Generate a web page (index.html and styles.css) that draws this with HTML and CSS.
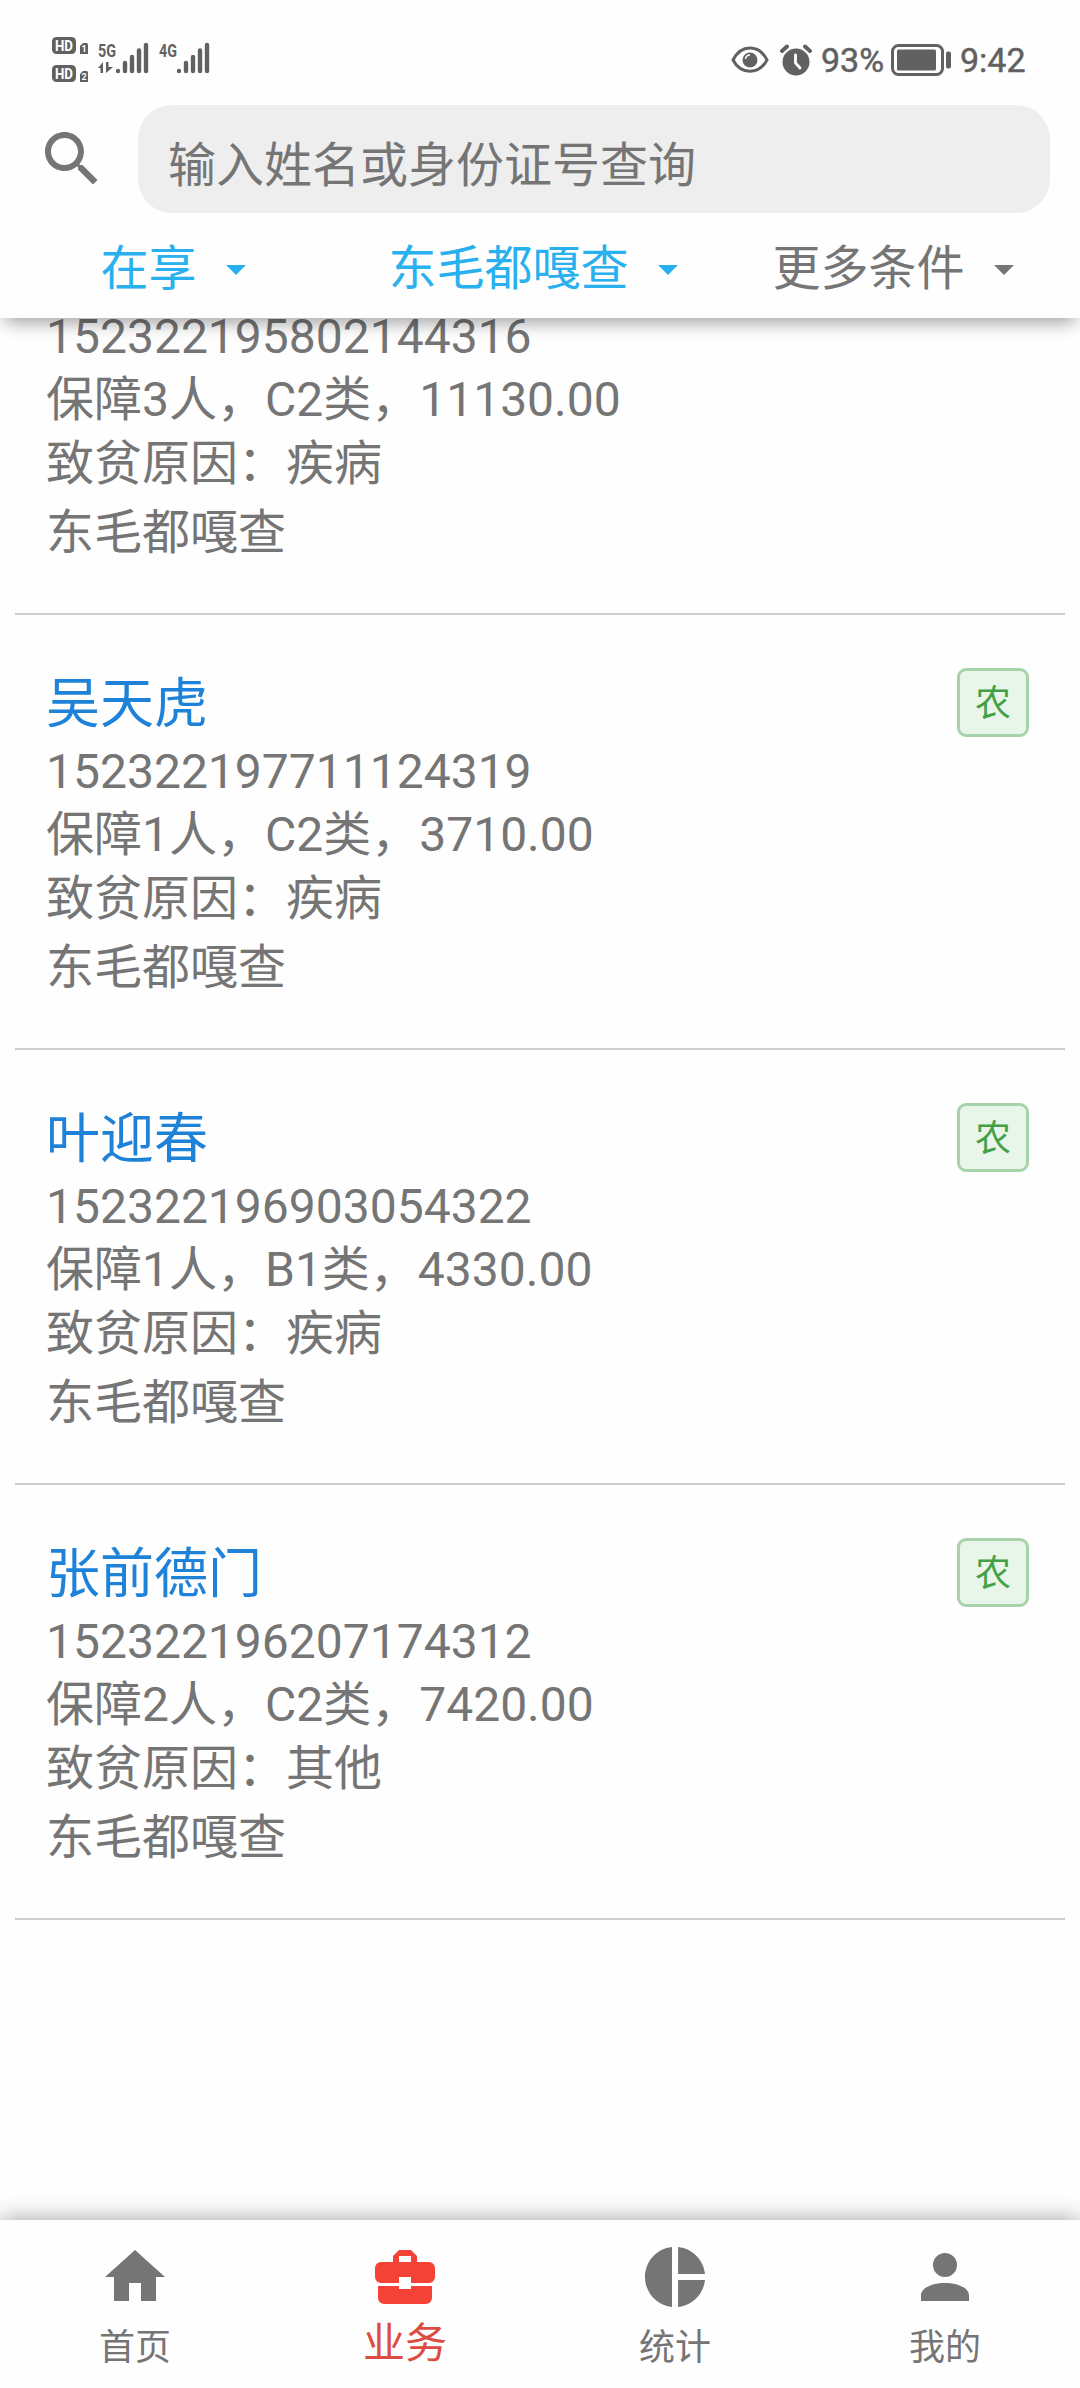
FILE: index.html
```html
<!DOCTYPE html>
<html lang="zh-CN">
<head>
    <meta charset="UTF-8">
    <meta name="viewport" content="width=device-width, initial-scale=1.0">
    <title>业务</title>
    <link rel="stylesheet" href="styles.css">
</head>
<body>
    <div class="app">
        <header class="header">
            <div class="status-bar">
                <svg class="signal" width="160" height="50" viewBox="0 0 160 50">
                    <!-- HD + sim 1 / 2 -->
                    <rect x="0" y="2" width="24" height="17" rx="4.5"/>
                    <text x="3" y="15.5" textLength="18" lengthAdjust="spacingAndGlyphs" class="hd">HD</text>
                    <path d="M28 11l3-3h3.500q1.500 0 1.500 1.500V19h-8z"/>
                    <text x="32" y="17" class="sim">1</text>
                    <rect x="0" y="30" width="24" height="17" rx="4.5"/>
                    <text x="3" y="43.5" textLength="18" lengthAdjust="spacingAndGlyphs" class="hd">HD</text>
                    <path d="M28 39l3-3h3.500q1.500 0 1.500 1.500V47h-8z"/>
                    <text x="32" y="45" class="sim">2</text>
                    <text x="46" y="21.5" textLength="18" lengthAdjust="spacingAndGlyphs" class="net">5G</text>
                    <path d="M46 33l5-6v11h-2.500v-5zM54 27h2.500v5h4.500l-7 6z"/>
                    <path d="M66 36v0M73 28v8M80 22v14M87 15.500v20.500M94 10v26" class="bars"/>
                    <text x="107" y="21.500" textLength="18" lengthAdjust="spacingAndGlyphs" class="net">4G</text>
                    <path d="M127 36v0M134 28v8M141 22v14M148 15.500v20.500M155 10v26" class="bars"/>
                </svg>
                <div class="status-right">
                    <svg width="38" height="30" viewBox="0 0 38 30">
                        <path d="M2 15C10-1 28-1 36 15C28 30 10 30 2 15z" fill="none" stroke="#616161" stroke-width="3"/>
                        <circle cx="19" cy="15" r="7.500"/>
                        <path d="M14.500 14a4.500 4.500 0 0 1 4.500-4" fill="none" stroke="#fff" stroke-width="1.500"/>
                    </svg>
                    <svg class="alarm" width="34" height="32" viewBox="0 0 34 32">
                        <circle cx="17" cy="18" r="13.500"/>
                        <path d="M3 7l5-4.500M31 7l-5-4.500" stroke="#616161" stroke-width="4" stroke-linecap="round"/>
                        <path d="M16.500 11v8l4.500 5" fill="none" stroke="#fff" stroke-width="2.800" stroke-linecap="round"/>
                    </svg>
                    <span class="percent">93%</span>
                    <svg class="battery" width="60" height="32" viewBox="0 0 60 32">
                        <rect x="1.500" y="1.500" width="50" height="29" rx="6" class="line"/>
                        <rect x="6" y="5.500" width="39" height="21" rx="1.500"/>
                        <rect x="55" y="7.500" width="5" height="17" rx="2"/>
                    </svg>
                    <span class="time">9:42</span>
                </div>
            </div>
            <div class="search">
                <svg class="icon" viewBox="0 0 24 24"><path d="M15.500 14h-.79l-.28-.27C15.410 12.590 16 11.110 16 9.500 16 5.910 13.090 3 9.500 3S3 5.910 3 9.500 5.910 16 9.500 16c1.610 0 3.090-.59 4.230-1.570l.27.28v.79l5 4.990L20.490 19l-4.990-5zm-6 0C7.010 14 5 11.990 5 9.500S7.010 5 9.500 5 14 7.010 14 9.500 11.990 14 9.500 14z"/></svg>
                <input class="search-input" type="text" placeholder="输入姓名或身份证号查询">
            </div>
            <div class="filters">
                <div class="filter active">在享<svg class="arrow" viewBox="0 0 24 24"><path d="M7 10l5 5 5-5z"/></svg></div>
                <div class="filter active">东毛都嘎查<svg class="arrow" viewBox="0 0 24 24"><path d="M7 10l5 5 5-5z"/></svg></div>
                <div class="filter">更多条件<svg class="arrow" viewBox="0 0 24 24"><path d="M7 10l5 5 5-5z"/></svg></div>
            </div>
        </header>

        <main class="list">
            <div class="card first">
                <div class="row">152322195802144316</div>
                <div class="row">保障3人，C2类，11130.00</div>
                <div class="row reason">致贫原因：疾病</div>
                <div class="row village">东毛都嘎查</div>
            </div>
            <div class="card">
                <div class="title">
                    <span class="name">吴天虎</span>
                    <span class="badge">农</span>
                </div>
                <div class="row">152322197711124319</div>
                <div class="row">保障1人，C2类，3710.00</div>
                <div class="row reason">致贫原因：疾病</div>
                <div class="row village">东毛都嘎查</div>
            </div>
            <div class="card">
                <div class="title">
                    <span class="name">叶迎春</span>
                    <span class="badge">农</span>
                </div>
                <div class="row">152322196903054322</div>
                <div class="row">保障1人，B1类，4330.00</div>
                <div class="row reason">致贫原因：疾病</div>
                <div class="row village">东毛都嘎查</div>
            </div>
            <div class="card">
                <div class="title">
                    <span class="name">张前德门</span>
                    <span class="badge">农</span>
                </div>
                <div class="row">152322196207174312</div>
                <div class="row">保障2人，C2类，7420.00</div>
                <div class="row reason">致贫原因：其他</div>
                <div class="row village">东毛都嘎查</div>
            </div>
        </main>

        <nav class="bottom-nav">
            <div class="nav-item">
                <svg class="icon" viewBox="0 0 24 24"><path d="M10 20v-6h4v6h5v-8h3L12 3 2 12h3v8z"/></svg>
                <span>首页</span>
            </div>
            <div class="nav-item active">
                <svg class="icon" viewBox="0 0 24 24"><path fill-rule="evenodd" d="M10 3h4l2 2v2h4a2 2 0 0 1 2 2v3a2 2 0 0 1-2 2h-6v-2h-4v2H4a2 2 0 0 1-2-2V9a2 2 0 0 1 2-2h4V5zM10 5v2h4V5zM3 15h7v1h4v-1h7v4a2 2 0 0 1-2 2H5a2 2 0 0 1-2-2z"/></svg>
                <span>业务</span>
            </div>
            <div class="nav-item">
                <svg class="icon" viewBox="0 0 24 24"><path d="M11 2v20c-5.070-.5-9-4.790-9-10s3.930-9.500 9-10zm2.030 0v8.990H22c-.47-4.740-4.240-8.520-8.970-8.990zm0 11.010V22c4.740-.47 8.500-4.250 8.970-8.990h-8.970z"/></svg>
                <span>统计</span>
            </div>
            <div class="nav-item">
                <svg class="icon" viewBox="0 0 24 24"><path d="M12 4a4 4 0 1 1 0 8 4 4 0 0 1 0-8zM12 14c4.420 0 8 1.790 8 4v2H4v-2c0-2.210 3.580-4 8-4z"/></svg>
                <span>我的</span>
            </div>
        </nav>
    </div>
</body>
</html>
```

FILE: styles.css
```css
* { box-sizing: border-box; }
body {
    margin: 0;
    font-family: Roboto, "Noto Sans CJK SC", sans-serif;
    font-size: 48px;
    color: #757575;
    background-color: #fefefe;
}
svg {
    display: block;
    flex: none;
    fill: currentColor;
}
.app {
    display: flex;
    flex-direction: column;
    height: 2388px;
    overflow: hidden;
}

/* header */
.header {
    position: relative;
    z-index: 1;
    flex: none;
    height: 318px;
    background-color: #fefefe;
    box-shadow: 0 12px 15px -6px rgba(0,0,0,0.28), 0 3px 18px rgba(0,0,0,0.08);
}
.status-bar {
    display: flex;
    justify-content: space-between;
    height: 105px;
    padding: 35px 53px 0 52px;
    color: #616161;
}
.line {
    fill: none;
    stroke: #616161;
    stroke-width: 3;
}
.bars {
    fill: none;
    stroke: #616161;
    stroke-width: 4.4;
    stroke-linecap: round;
}
.hd, .sim {
    font-size: 14px;
    font-weight: 700;
    fill: #fff;
}
.sim {
    font-size: 9px;
    text-anchor: middle;
}
.net {
    font-size: 18px;
    font-weight: 700;
}
.status-right {
    display: flex;
    align-items: center;
    height: 50px;
    font-size: 34px;
    line-height: 50px;
    -webkit-text-stroke: 0.5px #616161;
}
.alarm { margin-left: 10px; }
.percent {
    width: 70px;
    margin-left: 8px;
}
.time {
    width: 67px;
    margin-left: 9px;
}
.search {
    display: flex;
    height: 108px;
    padding: 0 30px 0 36px;
}
.icon {
    width: 72px;
    height: 72px;
}
.search .icon { margin: 18px 30px 0 0; }
.search-input {
    flex: 1;
    padding: 12px 30px 0;
    border: none;
    border-radius: 34px;
    background-color: #eee;
    font: inherit;
}
.search-input::placeholder {
    color: #757575;
    opacity: 1;
}
.filters { display: flex; }
.filter {
    display: flex;
    flex: 1;
    align-items: center;
    justify-content: center;
    height: 105px;
    padding-top: 6px;
    line-height: 105px;
}
.filter.active { color: #29b0ee; }
.arrow {
    width: 48px;
    height: 48px;
    margin-left: 15px;
}

/* list */
.list {
    flex: 1;
    margin-top: -13px;
    padding: 0 15px;
}
.card {
    padding: 55px 31px 49px;
    border-bottom: 2px solid #cecece;
}
.card.first { padding-top: 0; }
.title {
    display: flex;
    justify-content: space-between;
    height: 70px;
    padding-right: 5px;
}
.name {
    font-size: 54px;
    line-height: 70px;
    color: #1e82d8;
}
.badge {
    width: 72px;
    height: 69px;
    margin-top: -2px;
    border: 3px solid #a8d3aa;
    border-radius: 9px;
    background-color: #e8f5e9;
    font-size: 36px;
    line-height: 67px;
    text-align: center;
    color: #43a047;
}
.row {
    height: 63px;
    line-height: 63px;
    white-space: nowrap;
}
.reason { margin-top: 1px; }
.village { margin-top: 6px; }

/* bottom navigation */
.bottom-nav {
    position: relative;
    display: flex;
    flex: none;
    height: 168px;
    background-color: #fefefe;
    box-shadow: 0 -3px 20px rgba(0,0,0,0.3);
}
.nav-item {
    display: flex;
    flex: 1;
    flex-direction: column;
    align-items: center;
    padding-top: 21px;
    font-size: 36px;
    line-height: 70px;
}
.nav-item.active {
    font-size: 42px;
    line-height: 61px;
    color: #f44336;
}
.nav-item.active span { color: #db4c41; }
```
